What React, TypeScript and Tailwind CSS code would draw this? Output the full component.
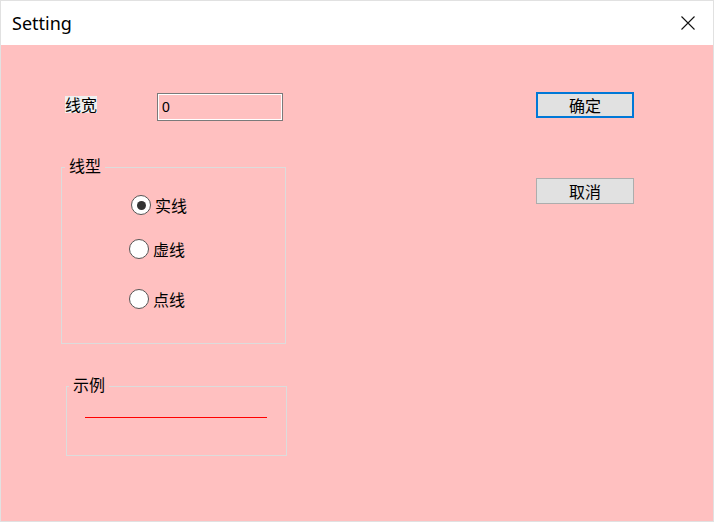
import React from 'react';

const cjk = { fontFamily: '"Noto Sans CJK SC", sans-serif' };

function Radio({ label, checked, shift = 0 }: { label: string; checked?: boolean; shift?: number }) {
  return (
    <div className="flex items-center h-[20px]" style={{ marginLeft: shift }}>
      <span className="w-[20px] h-[20px] rounded-full border border-[#555] bg-white flex items-center justify-center">
        {checked && <span className="w-[9px] h-[9px] rounded-full bg-[#333]" />}
      </span>
      <span className="ml-[4px] text-[16px] leading-[20px] text-black">{label}</span>
    </div>
  );
}

export default function App() {
  return (
    <div className="w-[714px] h-[522px] border border-[#e1e1e1] flex flex-col bg-white" style={cjk}>
      {/* Title bar */}
      <div className="h-[44px] flex items-center bg-white shrink-0">
        <span
          className="ml-[11px] text-[18px] text-black"
          style={{ fontFamily: '"Noto Sans", sans-serif' }}
        >
          Setting
        </span>
        <svg className="ml-auto mr-[18px]" width="14" height="14" viewBox="0 0 14 14">
          <path d="M0.5 0.5 L13.5 13.5 M13.5 0.5 L0.5 13.5" stroke="#111" strokeWidth="1.1" fill="none" />
        </svg>
      </div>

      {/* Body */}
      <div className="flex-1 bg-[#ffc0c0] flex">
        <div className="pl-[60px] flex flex-col">
          {/* Line width */}
          <div className="flex items-start mt-[48px]">
            <span className="ml-[4px] mt-[3px] text-[16px] leading-[17px] bg-[#f0f0f0] text-black">线宽</span>
            <div className="ml-[60px] w-[126px] h-[28px] border border-[#7a7a7a] shadow-[inset_0_0_0_1px_#fff] pl-[4px] flex items-center">
              <span className="text-[14px] text-black" style={{ fontFamily: '"Liberation Sans", sans-serif' }}>0</span>
            </div>
          </div>

          {/* Line style group */}
          <div className="relative mt-[46px] w-[225px] h-[177px] border border-[#dcdcdc] flex flex-col">
            <span className="absolute left-[3px] top-[-11px] px-[4px] bg-[#ffc0c0] text-[16px] leading-[16px] text-black">线型</span>
            <div className="mt-[27px] ml-[69px] flex flex-col">
              <Radio label="实线" checked />
              <div className="mt-[24px]">
                <Radio label="虚线" shift={-2} />
              </div>
              <div className="mt-[30px]">
                <Radio label="点线" shift={-2} />
              </div>
            </div>
          </div>

          {/* Sample group */}
          <div className="relative mt-[42px] ml-[5px] w-[221px] h-[70px] border border-[#dcdcdc]">
            <span className="absolute left-[2px] top-[-11px] px-[4px] bg-[#ffc0c0] text-[16px] leading-[16px] text-black">示例</span>
            <div className="mt-[30px] ml-[18px] w-[182px] h-px bg-[#ff0000]" />
          </div>
        </div>

        {/* Buttons */}
        <div className="ml-auto mr-[79px] flex flex-col">
          <button className="mt-[47px] w-[98px] h-[26px] border-2 border-[#0078d7] bg-[#e1e1e1] text-[16px] leading-none text-black">
            确定
          </button>
          <button className="mt-[60px] w-[98px] h-[26px] border border-[#adadad] bg-[#e1e1e1] text-[16px] leading-none text-black">
            取消
          </button>
        </div>
      </div>
    </div>
  );
}
